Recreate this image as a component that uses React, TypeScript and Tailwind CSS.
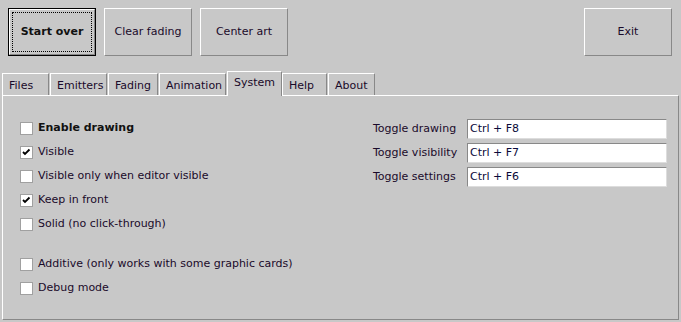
const tabs = ['Files', 'Emitters', 'Fading', 'Animation', 'System', 'Help', 'About'];
const tabWidths = [47, 57, 50, 67, 55, 45, 47];

const checks = [
  { label: 'Enable drawing', on: false, bold: true },
  { label: 'Visible', on: true },
  { label: 'Visible only when editor visible', on: false },
  { label: 'Keep in front', on: true },
  { label: 'Solid (no click-through)', on: false },
  null,
  { label: 'Additive (only works with some graphic cards)', on: false },
  { label: 'Debug mode', on: false },
];

const hotkeys = [
  ['Toggle drawing', 'Ctrl + F8'],
  ['Toggle visibility', 'Ctrl + F7'],
  ['Toggle settings', 'Ctrl + F6'],
];

function Button({ label, focused }: { label: string; focused?: boolean }) {
  if (focused) {
    return (
      <div className="w-[88px] h-[48px] border border-black">
        <div className="w-full h-full border border-t-white border-l-white border-r-[#888] border-b-[#888] p-[2px]">
          <div className="w-full h-full border border-dotted border-black flex items-center justify-center font-bold text-[#111]">
            {label}
          </div>
        </div>
      </div>
    );
  }
  return (
    <div className="w-[88px] h-[48px] border border-t-white border-l-white border-r-[#888] border-b-[#888] flex items-center justify-center text-[#1a0a2a]">
      {label}
    </div>
  );
}

function Check({ on }: { on: boolean }) {
  return (
    <div className="w-[13px] h-[13px] bg-white border border-[#a0a0a0] flex items-center justify-center shrink-0">
      {on && (
        <svg width="9" height="9" viewBox="0 0 9 9">
          <path d="M1 4 L3 6 L7.5 1.5" stroke="#000" strokeWidth="1.8" fill="none" />
        </svg>
      )}
    </div>
  );
}

export default function App() {
  return (
    <div
      className="w-[681px] h-[322px] bg-[#c8c8c8] text-[11px] text-[#1a0a2a] overflow-hidden"
      style={{ fontFamily: 'Tahoma, "DejaVu Sans", sans-serif' }}
    >
      <div className="flex gap-[8px] pt-[8px] pl-[8px] pr-[9px]">
        <Button label="Start over" focused />
        <Button label="Clear fading" />
        <Button label="Center art" />
        <div className="ml-auto">
          <Button label="Exit" />
        </div>
      </div>

      <div className="flex items-end h-[24px] mt-[15px] pl-[2px] relative z-10">
        {tabs.map((t, i) => {
          const sel = t === 'System';
          return (
            <div
              key={t}
              style={{ width: tabWidths[i] }}
              className={
                sel
                  ? 'h-[25px] -mb-[1px] bg-[#c8c8c8] border-t border-l border-white border-r border-r-[#888] pl-[6px] pt-[3px]'
                  : 'h-[22px] mr-[1px] border-t border-l border-white border-r border-r-[#888] pl-[6px] pt-[4px]'
              }
            >
              {t}
            </div>
          );
        })}
      </div>

      <div className="mx-[2px] h-[225px] border border-t-white border-l-white border-r-[#888] border-b-[#888] flex">
        <div className="w-[370px] pl-[17px] pt-[20px] flex flex-col">
          {checks.map((c, i) =>
            c ? (
              <div key={i} className="h-[24px] flex items-center gap-[5px]">
                <Check on={c.on} />
                <span className={c.bold ? 'font-bold text-[#111]' : ''}>{c.label}</span>
              </div>
            ) : (
              <div key={i} className="h-[16px]" />
            )
          )}
        </div>
        <div className="pt-[23px] flex flex-col gap-[4px]">
          {hotkeys.map(([l, v]) => (
            <div key={l} className="h-[20px] flex items-center">
              <span className="w-[94px]">{l}</span>
              <div className="w-[200px] h-[20px] bg-white border border-t-[#888] border-l-[#888] border-r-[#ddd] border-b-[#ddd] flex items-center pl-[2px] text-[#0a0a3a]">
                {v}
              </div>
            </div>
          ))}
        </div>
      </div>
    </div>
  );
}
